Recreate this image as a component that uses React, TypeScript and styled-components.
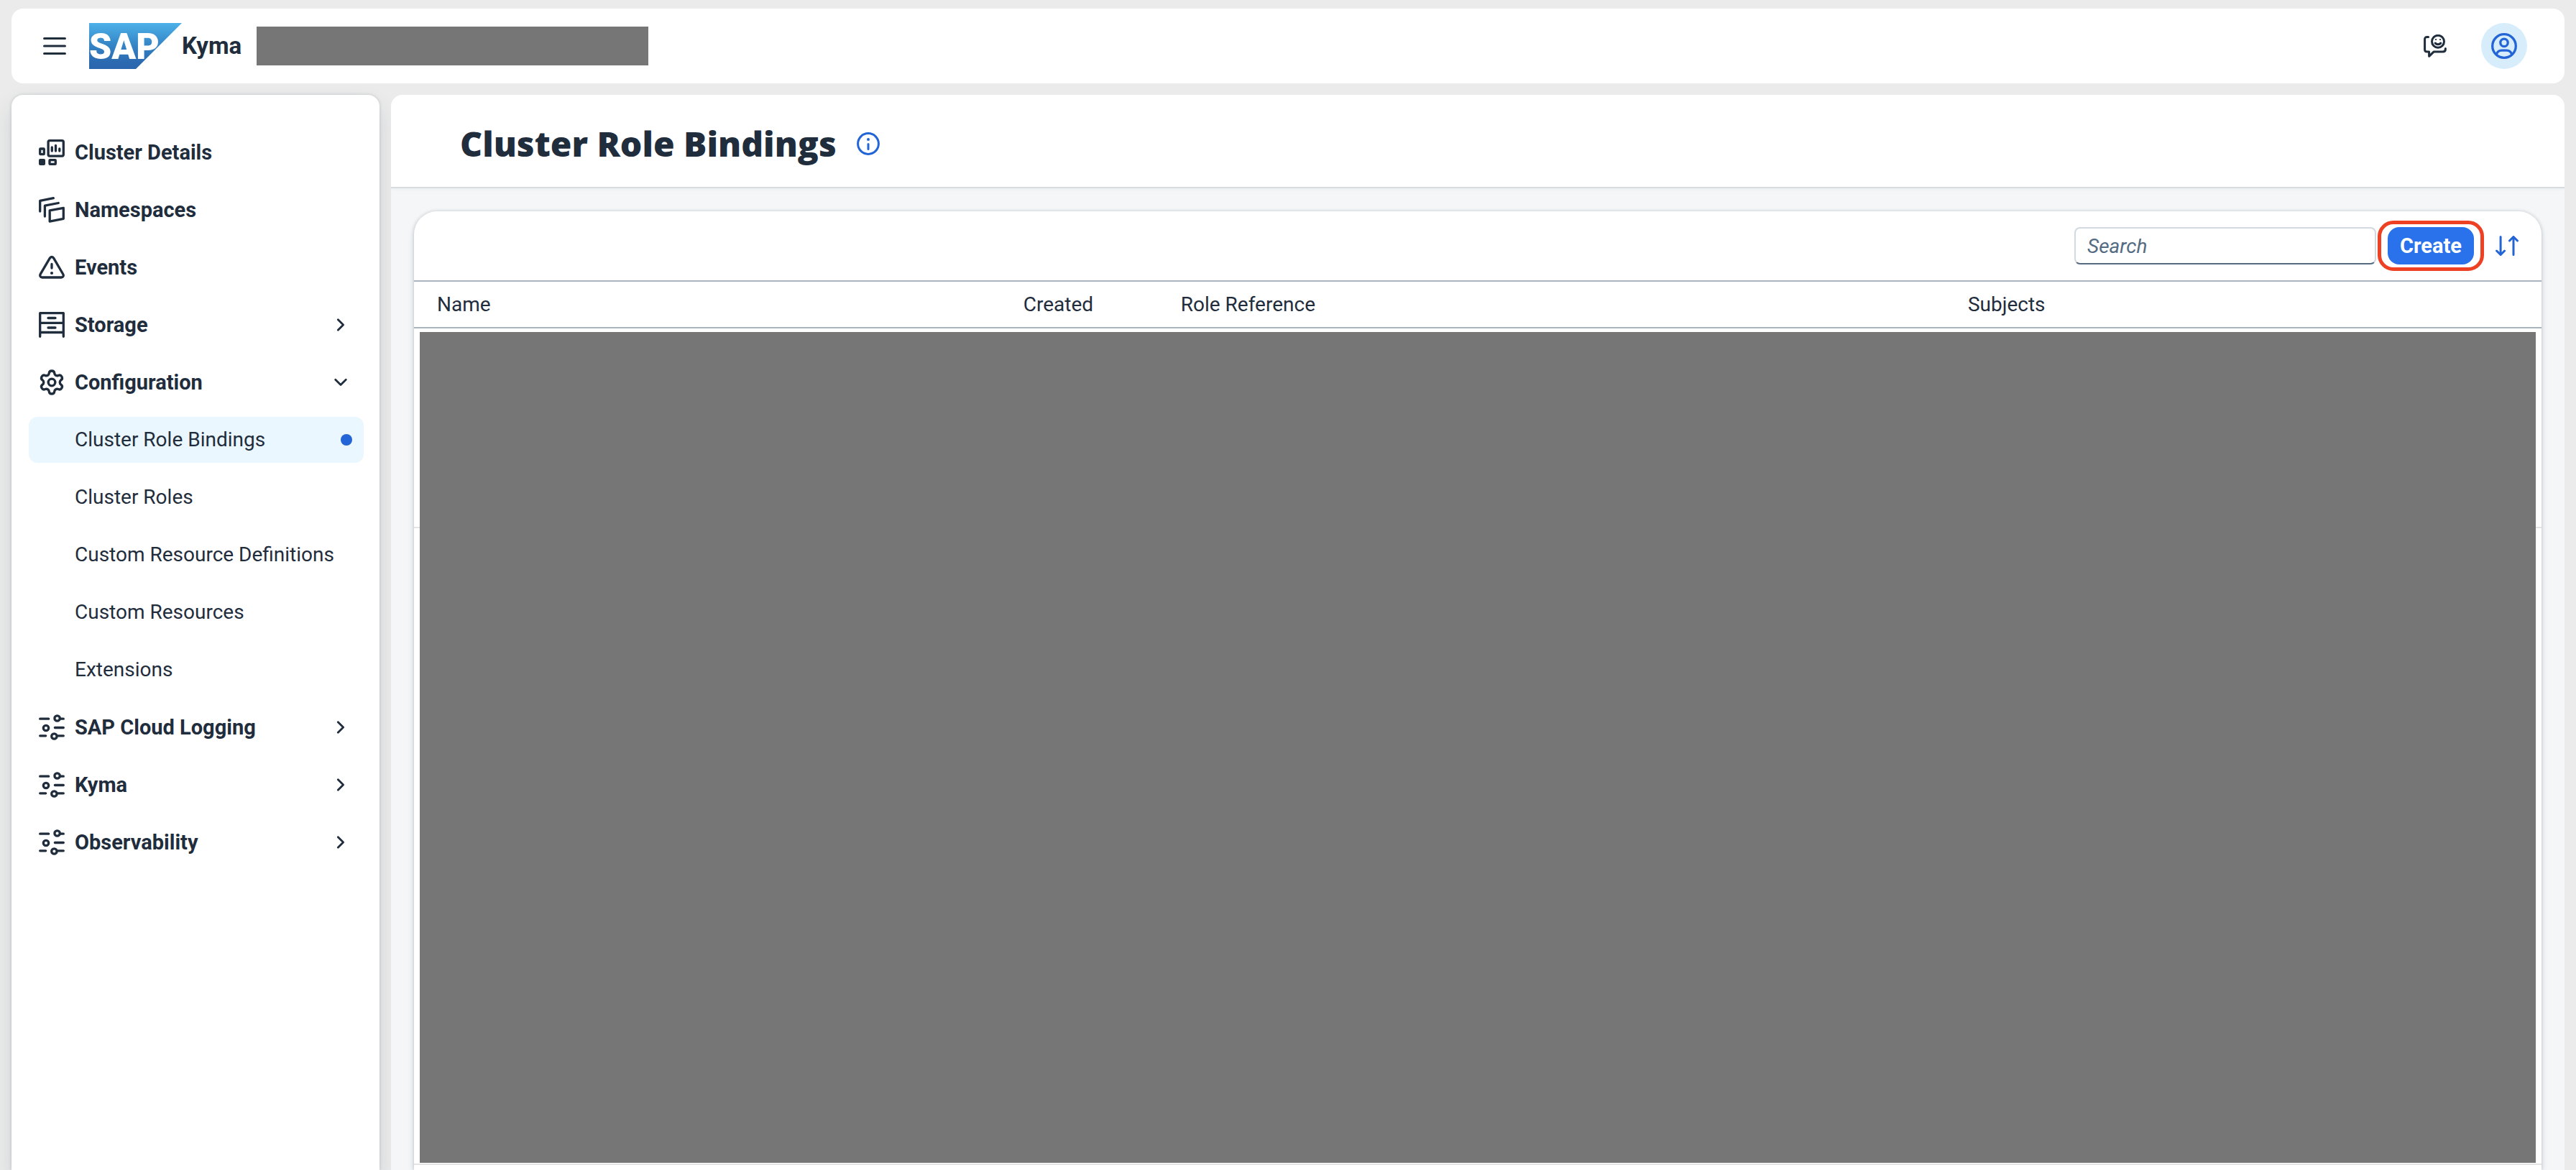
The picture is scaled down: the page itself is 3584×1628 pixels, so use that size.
import React from 'react';
import styled, { createGlobalStyle, css } from 'styled-components';
import { Settings } from 'lucide-react';

const color = {
  page: '#ebebeb',
  surface: '#ffffff',
  content: '#f4f6f8',
  text: '#1f2d3d',
  muted: '#556b82',
  accent: '#2364d6',
  accentFill: '#2a72eb',
  selected: '#ebf7ff',
  redacted: '#767676',
  line: '#a9b4be',
  softLine: '#e4e4e5',
  highlight: '#ee4023',
};

const GlobalStyle = createGlobalStyle`
  *, *::before, *::after { box-sizing: border-box; }
  body {
    margin: 0;
    background: ${color.page};
    color: ${color.text};
    font-family: Roboto, "Liberation Sans", sans-serif;
    font-size: 28px;
    line-height: 40px;
  }
  button, input { font: inherit; color: inherit; }
`;

const Shell = styled.div`
  display: flex;
  flex-direction: column;
  gap: 16px;
  height: 100vh;
  padding: 12px 16px 0;
  overflow: hidden;
`;

const TopBar = styled.header`
  position: relative;
  z-index: 1;
  flex: none;
  display: flex;
  align-items: center;
  height: 104px;
  padding: 0 52px 0 44px;
  border-radius: 16px;
  background: ${color.surface};
`;

const IconButton = styled.button<{ $accent?: boolean }>`
  display: flex;
  align-items: center;
  justify-content: center;
  padding: 0;
  border: 0;
  background: none;
  color: ${(p) => (p.$accent ? color.accent : color.text)};
  cursor: pointer;
`;

const Avatar = styled(IconButton)`
  width: 64px;
  height: 64px;
  border-radius: 50%;
  background: #d7edfc;
`;

const Home = styled.a`
  display: flex;
  align-items: center;
  margin-left: 32px;
  color: inherit;
  text-decoration: none;
  font-size: 33px;
  font-weight: 700;
`;

const ClusterName = styled.div`
  width: 545px;
  height: 54px;
  margin-left: 21px;
  background: ${color.redacted};
`;

const TopActions = styled.div`
  display: flex;
  align-items: center;
  gap: 48px;
  margin-left: auto;
`;

const Body = styled.div`
  flex: 1;
  display: flex;
  gap: 16px;
  min-height: 0;
`;

const SideNav = styled.nav`
  flex: none;
  width: 512px;
  padding: 48px 22px 0 24px;
  border-radius: 16px 16px 0 0;
  background: ${color.surface};
  box-shadow: 0 0 4px rgba(34, 53, 72, 0.2), 0 16px 32px rgba(34, 53, 72, 0.12);
`;

const NavList = styled.ul`
  display: flex;
  flex-direction: column;
  gap: 16px;
  margin: 0;
  padding: 0;
  list-style: none;
`;

const NavGroup = styled.li`
  display: flex;
  flex-direction: column;
  gap: 16px;
`;

const navRow = css`
  display: flex;
  align-items: center;
  width: 100%;
  height: 64px;
  border: 0;
  border-radius: 12px;
  color: ${color.text};
  text-align: left;
  text-decoration: none;
  cursor: pointer;
`;

const NavItem = styled.button`
  ${navRow}
  gap: 14px;
  padding: 0 22px 0 14px;
  background: none;
  font-size: 29px;
  font-weight: 700;
`;

const NavLabel = styled.span`
  flex: 1;
`;

const SubItem = styled.a<{ $selected?: boolean }>`
  ${navRow}
  justify-content: space-between;
  padding: 0 16px 0 64px;
  background: ${(p) => (p.$selected ? color.selected : 'transparent')};
`;

const SelectedDot = styled.span`
  width: 16px;
  height: 16px;
  border-radius: 50%;
  background: ${color.accent};
`;

const Main = styled.main`
  flex: 1;
  display: flex;
  flex-direction: column;
  min-width: 0;
  border-radius: 16px 16px 0 0;
  background: ${color.content};
  overflow: hidden;
  z-index: 0;
`;

const TitleBar = styled.div`
  flex: none;
  display: flex;
  align-items: center;
  gap: 28px;
  height: 130px;
  padding: 8px 96px 0;
  border-bottom: 2px solid #d9dcdf;
  background: ${color.surface};
  box-shadow: 0 2px 4px rgba(34, 53, 72, 0.04);
`;

const Title = styled.h1`
  margin: 0;
  font-family: "Open Sans", "Noto Sans", sans-serif;
  font-size: 48px;
  line-height: 64px;
  font-weight: 800;
`;

const Card = styled.section`
  flex: 1;
  display: flex;
  flex-direction: column;
  min-height: 0;
  margin: 32px 32px 0;
  border-radius: 32px 32px 0 0;
  background: ${color.surface};
  box-shadow: 0 0 4px rgba(34, 53, 72, 0.2), 0 4px 10px rgba(34, 53, 72, 0.14);
`;

const Toolbar = styled.div`
  flex: none;
  display: flex;
  align-items: center;
  justify-content: flex-end;
  height: 98px;
  padding: 0 32px;
  border-bottom: 2px solid ${color.line};
`;

const SearchInput = styled.input`
  width: 420px;
  height: 52px;
  padding: 0 16px;
  border: 2px solid #d3d9df;
  border-bottom-color: ${color.muted};
  border-radius: 8px;
  background: ${color.surface};
  outline: none;

  &::placeholder {
    color: ${color.muted};
    font-style: italic;
    opacity: 1;
  }
`;

const Highlight = styled.div`
  margin: 0 16px 0 2px;
  padding: 4px 9px;
  border: 5px solid ${color.highlight};
  border-radius: 22px;
`;

const CreateButton = styled.button`
  display: block;
  height: 52px;
  padding: 0 17px;
  border: 0;
  border-radius: 16px;
  background: ${color.accentFill};
  color: #ffffff;
  font-size: 29px;
  font-weight: 700;
  cursor: pointer;
`;

const TableArea = styled.div`
  position: relative;
  flex: 1;
  min-height: 0;
  overflow: hidden;
`;

const Table = styled.table`
  width: 100%;
  table-layout: fixed;
  border-collapse: separate;
  border-spacing: 0;
`;

const Col = styled.col<{ $width?: string }>`
  width: ${(p) => p.$width ?? 'auto'};
`;

const HeadCell = styled.th`
  height: 65px;
  padding: 0 16px;
  border-bottom: 2px solid ${color.line};
  font-weight: 400;
  text-align: left;

  &:first-child {
    padding-left: 32px;
  }
`;

const Cell = styled.td<{ $height: number }>`
  height: ${(p) => p.$height}px;
  padding: 0;
  border-bottom: 2px solid ${color.softLine};
`;

const RedactedRows = styled.div`
  position: absolute;
  inset: 70px 8px 10px;
  background: ${color.redacted};
`;

const Stroke = styled.svg`
  flex: none;
  display: block;
  fill: none;
  stroke: currentColor;
  stroke-linecap: round;
  stroke-linejoin: round;
`;

const NavIcon = ({ children }: { children: React.ReactNode }) => (
  <Stroke width="36" height="36" viewBox="0 0 36 36" strokeWidth="3.3" aria-hidden>
    {children}
  </Stroke>
);

const DetailsIcon = () => (
  <NavIcon>
    <rect x="13.1" y="1.7" width="21.2" height="21.4" rx="2" />
    <path d="M18.3 11v5M23.5 8.5v7.5M28.8 13v3" />
    <rect x="1.7" y="13" width="5.6" height="7.6" rx="0.6" />
    <rect x="15" y="28.7" width="8.3" height="5.6" rx="0.6" />
    <rect x="0" y="27" width="9" height="9" rx="2" fill="currentColor" stroke="none" />
  </NavIcon>
);

const NamespacesIcon = () => (
  <NavIcon>
    <path d="M1.7 20V5.4L20.3 1.7M8.4 27V12.2l18.8-3.7M15.2 18.8l19.1-3.5v15l-19.1 3.9z" />
  </NavIcon>
);

const EventsIcon = () => (
  <NavIcon>
    <path d="M15.2 5.3 2.4 27.2C.9 29.8 2.2 32 4.8 32h26.4c2.6 0 3.9-2.2 2.4-4.8L20.8 5.3c-1.4-2.4-4.2-2.4-5.6 0zM18 13.5v5.5" />
    <circle cx="18" cy="26" r="2.1" fill="currentColor" stroke="none" />
  </NavIcon>
);

const StorageIcon = () => (
  <NavIcon>
    <path d="M1.7 34.3V1.7h32.6v32.6M1.7 15.3h32.6M1.7 28.5h32.6M13 8.5h10M13 22h10" />
  </NavIcon>
);

const ConfigurationIcon = () => (
  <Settings size={36} viewBox="0.8 0.8 22.4 22.4" strokeWidth={2.1} aria-hidden />
);

const SlidersIcon = () => (
  <NavIcon>
    <path d="M1.7 6.2h12M30 6.2h4.3M22.4 18.5h11.9M1.7 29.8h8M25.5 29.8h8.8" />
    <circle cx="25.6" cy="5.5" r="3.7" />
    <circle cx="10" cy="19" r="3.7" />
    <circle cx="21.4" cy="30.5" r="3.7" />
  </NavIcon>
);

const Chevron = ({ open }: { open?: boolean }) => (
  <Stroke width="20" height="20" viewBox="0 0 20 20" strokeWidth="2.8" aria-hidden>
    <path d={open ? 'M2.7 6.3 10 13.6l7.3-7.3' : 'M6.3 2.7 13.6 10l-7.3 7.3'} />
  </Stroke>
);

const MenuIcon = () => (
  <Stroke width="32" height="32" viewBox="0 0 32 32" strokeWidth="3.2" aria-hidden>
    <path d="M1.6 5.5h28.8M1.6 16h28.8M1.6 26.5h28.8" />
  </Stroke>
);

const FeedbackIcon = () => (
  <Stroke width="32" height="32" viewBox="0 0 32 32" strokeWidth="3" aria-hidden>
    <path d="M6.6 3.4H4.8c-2 0-3.2 1.2-3.2 3.2V21c0 2 1.2 3.1 3.2 3.1h2.8v6.2l6.4-6.2h12.6c2.4 0 3.8-1.4 3.8-3.8v-.8" />
    <circle cx="20" cy="9.8" r="8.5" />
    <path d="M16.2 12c1.6 2.2 6 2.2 7.6 0" />
    <path d="M17 7h.1M23 7h.1" strokeWidth="2.2" />
  </Stroke>
);

const PersonIcon = () => (
  <NavIcon>
    <circle cx="18" cy="18" r="16.3" />
    <circle cx="18" cy="13.4" r="5.2" />
    <path d="M7.4 29.4c1.4-3.6 3.6-5.2 7-5.2h7.2c3.4 0 5.6 1.6 7 5.2" />
  </NavIcon>
);

const InfoIcon = () => (
  <Stroke width="32" height="32" viewBox="0 0 32 32" strokeWidth="3" aria-hidden>
    <circle cx="16" cy="16" r="14.4" />
    <path d="M16 16.6v7" />
    <circle cx="16" cy="10" r="2" fill="currentColor" stroke="none" />
  </Stroke>
);

const SortIcon = () => (
  <Stroke width="32" height="28" viewBox="0 0 32 28" strokeWidth="3" aria-hidden>
    <path d="M7.1 1.5v25M1.6 21l5.5 5.5 5.5-5.5M25 26.5v-25M19.5 7 25 1.5 30.5 7" />
  </Stroke>
);

const LogoMark = styled.svg`
  display: block;
  overflow: visible;
`;

const LogoText = styled.text`
  fill: #ffffff;
  font-family: Roboto, "Liberation Sans", sans-serif;
  font-size: 50px;
  font-weight: 900;
`;

const SapLogo = () => (
  <LogoMark width="129" height="64" viewBox="0 0 129 64" role="img" aria-label="SAP">
    <defs>
      <linearGradient id="logoFill" x1="0" y1="0" x2="0" y2="1">
        <stop offset="0" stopColor="#4db1e8" />
        <stop offset="0.5" stopColor="#3383c5" />
        <stop offset="0.85" stopColor="#2b69b0" />
        <stop offset="1" stopColor="#2a66ad" />
      </linearGradient>
    </defs>
    <path d="M0 0h129L65 64H0z" fill="url(#logoFill)" />
    <LogoText x="0" y="50">SAP</LogoText>
  </LogoMark>
);

type Entry = {
  label: string;
  icon: React.ComponentType;
  expandable?: boolean;
  children?: string[];
};

const entries: Entry[] = [
  { label: 'Cluster Details', icon: DetailsIcon },
  { label: 'Namespaces', icon: NamespacesIcon },
  { label: 'Events', icon: EventsIcon },
  { label: 'Storage', icon: StorageIcon, expandable: true },
  {
    label: 'Configuration',
    icon: ConfigurationIcon,
    expandable: true,
    children: [
      'Cluster Role Bindings',
      'Cluster Roles',
      'Custom Resource Definitions',
      'Custom Resources',
      'Extensions',
    ],
  },
  { label: 'SAP Cloud Logging', icon: SlidersIcon, expandable: true },
  { label: 'Kyma', icon: SlidersIcon, expandable: true },
  { label: 'Observability', icon: SlidersIcon, expandable: true },
];

const current = 'Cluster Role Bindings';

const columns = [
  { label: 'Name', width: '28.1%' },
  { label: 'Created', width: '7.4%' },
  { label: 'Role Reference', width: '37%' },
  { label: 'Subjects' },
];

const rowHeights = [278, 886, 278];

export default function App() {
  return (
    <>
      <GlobalStyle />
      <Shell>
        <TopBar>
          <IconButton type="button" aria-label="Toggle navigation">
            <MenuIcon />
          </IconButton>
          <Home href="#">
            <SapLogo />
            Kyma
          </Home>
          <ClusterName />
          <TopActions>
            <IconButton type="button" aria-label="Feedback">
              <FeedbackIcon />
            </IconButton>
            <Avatar type="button" aria-label="Profile" $accent>
              <PersonIcon />
            </Avatar>
          </TopActions>
        </TopBar>
        <Body>
          <SideNav aria-label="Cluster">
            <NavList>
              {entries.map(({ label, icon: Icon, expandable, children }) => (
                <NavGroup key={label}>
                  <NavItem type="button" aria-expanded={expandable ? !!children : undefined}>
                    <Icon />
                    <NavLabel>{label}</NavLabel>
                    {expandable && <Chevron open={!!children} />}
                  </NavItem>
                  {children && (
                    <NavList>
                      {children.map((child) => (
                        <li key={child}>
                          <SubItem
                            href="#"
                            $selected={child === current}
                            aria-current={child === current ? 'page' : undefined}
                          >
                            {child}
                            {child === current && <SelectedDot />}
                          </SubItem>
                        </li>
                      ))}
                    </NavList>
                  )}
                </NavGroup>
              ))}
            </NavList>
          </SideNav>
          <Main>
            <TitleBar>
              <Title>Cluster Role Bindings</Title>
              <IconButton type="button" aria-label="Description" $accent>
                <InfoIcon />
              </IconButton>
            </TitleBar>
            <Card>
              <Toolbar>
                <SearchInput type="text" placeholder="Search" aria-label="Search" />
                <Highlight>
                  <CreateButton type="button">Create</CreateButton>
                </Highlight>
                <IconButton type="button" aria-label="Sort" $accent>
                  <SortIcon />
                </IconButton>
              </Toolbar>
              <TableArea>
                <Table>
                  <colgroup>
                    {columns.map((c) => (
                      <Col key={c.label} $width={c.width} />
                    ))}
                  </colgroup>
                  <thead>
                    <tr>
                      {columns.map((c) => (
                        <HeadCell key={c.label} scope="col">
                          {c.label}
                        </HeadCell>
                      ))}
                    </tr>
                  </thead>
                  <tbody>
                    {rowHeights.map((height, i) => (
                      <tr key={i}>
                        <Cell $height={height} colSpan={columns.length} />
                      </tr>
                    ))}
                  </tbody>
                </Table>
                <RedactedRows />
              </TableArea>
            </Card>
          </Main>
        </Body>
      </Shell>
    </>
  );
}
